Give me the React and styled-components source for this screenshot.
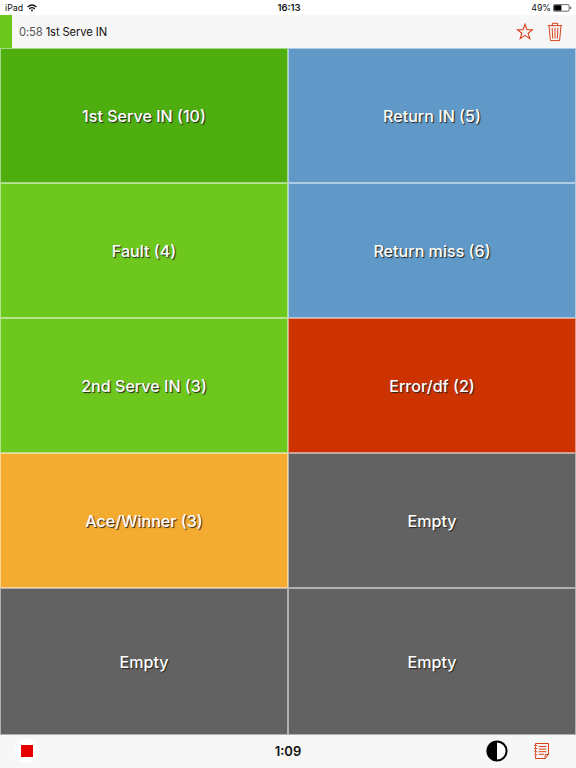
import React from 'react'
import styled, { createGlobalStyle } from 'styled-components'

const events = [
  { id: 1, label: '1st Serve IN (10)', color: '#4eae10' },
  { id: 2, label: 'Return IN (5)', color: '#6099c7' },
  { id: 3, label: 'Fault (4)', color: '#6dc71c' },
  { id: 4, label: 'Return miss (6)', color: '#6099c7' },
  { id: 5, label: '2nd Serve IN (3)', color: '#6dc71c' },
  { id: 6, label: 'Error/df (2)', color: '#cc3300' },
  { id: 7, label: 'Ace/Winner (3)', color: '#f4ac30' },
  { id: 8, label: 'Empty', color: '#626262' },
  { id: 9, label: 'Empty', color: '#626262' },
  { id: 10, label: 'Empty', color: '#626262' },
]

const WifiIcon = () => (
  <svg width="10" height="8" viewBox="0 0 10 8" fill="none" stroke="#111" strokeWidth="1.3">
    <path d="M.6 3Q5-1.1 9.4 3" />
    <path d="M2.3 4.9Q5 2.4 7.7 4.9" />
    <path d="M3.6 6 5 7.6 6.4 6Q5 5 3.6 6Z" fill="#111" stroke="none" />
  </svg>
)

const BatteryIcon = () => (
  <svg width="19" height="8" viewBox="0 0 19 8">
    <rect x=".5" y=".6" width="15.6" height="6.6" rx="1" fill="#fff" stroke="#444" strokeWidth=".8" />
    <rect x="1.2" y="1.2" width="7.2" height="5.4" fill="#000" />
    <path d="M17.1 2.6Q18.3 2.9 18.3 3.9T17.1 5.2Z" fill="#444" />
  </svg>
)

const StarIcon = () => (
  <svg width="18" height="18" viewBox="0 0 18 18" fill="none" stroke="#d8401c" strokeWidth="1.1">
    <path d="M9 1.2 10.9 6.7H16.6L12.1 10.2 13.8 15.7 9 12.4 4.2 15.7 5.9 10.2 1.4 6.7H7.1Z" />
  </svg>
)

const TrashIcon = () => (
  <svg width="16" height="20" viewBox="0 0 16 20" fill="none" stroke="#d8401c" strokeWidth="1">
    <path d="M.8 3.6H15.2M5.3 3.4V1.3H10.7V3.4M2 3.8 3.4 18.6H12.6L14 3.8" />
    <path d="M5.1 5.8 5.7 16.5M8 5.8V16.5M10.9 5.8 10.3 16.5" />
  </svg>
)

const ContrastIcon = () => (
  <svg width="22" height="22" viewBox="0 0 22 22">
    <circle cx="11" cy="11" r="9.6" fill="#fff" stroke="#000" strokeWidth="2" />
    <path d="M11 1.3A9.7 9.7 0 0 0 11 20.7Z" />
  </svg>
)

const NotesIcon = () => (
  <svg width="16" height="18" viewBox="0 0 16 18" fill="none" stroke="#d8401c" strokeWidth="1">
    <path d="M1.5 1.5H14.5V12.5L11.2 16.5H1.5V13.6M1.5 12.2V10.4M1.5 9V7.3M1.5 6V4.2M1.5 3V1.5" />
    <path d="M14.5 12.5H11.2V16.5" />
    <path d="M.3 3.5H3.2M.3 6.6H3.2M.3 9.7H3.2M.3 12.9H3.2" />
    <path d="M4.7 4.5H12.3M4.7 7.1H12.3M4.7 9.7H12.3M4.7 12.3H10" />
  </svg>
)

const App = () => (
  <Screen>
    <GlobalStyle />
    <StatusBar>
      <Carrier>
        <span>iPad</span>
        <WifiIcon />
      </Carrier>
      <Clock>16:13</Clock>
      <Battery>
        <span>49%</span>
        <BatteryIcon />
      </Battery>
    </StatusBar>
    <LastEvent>
      <ColorMark />
      <EventText>
        <EventTime>0:58</EventTime> 1st Serve IN
      </EventText>
      <HeaderActions>
        <IconButton aria-label="Favorite"><StarIcon /></IconButton>
        <IconButton aria-label="Delete"><TrashIcon /></IconButton>
      </HeaderActions>
    </LastEvent>
    <EventGrid>
      {events.map((event) => (
        <EventButton key={event.id} $color={event.color}>
          {event.label}
        </EventButton>
      ))}
    </EventGrid>
    <Footer>
      <StopButton aria-label="Stop"><StopSquare /></StopButton>
      <Timer>1:09</Timer>
      <FooterActions>
        <IconButton aria-label="Contrast"><ContrastIcon /></IconButton>
        <IconButton aria-label="Notes"><NotesIcon /></IconButton>
      </FooterActions>
    </Footer>
  </Screen>
)

const GlobalStyle = createGlobalStyle`
  * {
    box-sizing: border-box;
  }
  body {
    margin: 0;
    font-family: Inter, "Liberation Sans", sans-serif;
    color: #111;
  }
  button {
    border: 0;
    padding: 0;
    font: inherit;
    color: inherit;
    background: none;
  }
  svg {
    display: block;
  }
`

const Screen = styled.div`
  width: 576px;
  height: 768px;
  display: flex;
  flex-direction: column;
  overflow: hidden;
  background: #f7f7f7;
`

const StatusBar = styled.div`
  height: 15px;
  flex: none;
  display: grid;
  grid-template-columns: 1fr auto 1fr;
  align-items: center;
  padding: 1px 4px 0 5px;
  background: #fff;
  font-size: 8.8px;
  line-height: 14px;
`

const Carrier = styled.div`
  display: flex;
  align-items: center;
  gap: 4px;
`

const Clock = styled.div`
  margin-left: 1px;
  font-size: 9.5px;
  font-weight: 600;
`

const Battery = styled.div`
  display: flex;
  align-items: center;
  justify-content: flex-end;
  gap: 2px;
`

const LastEvent = styled.div`
  height: 33px;
  flex: none;
  display: flex;
  align-items: center;
  padding-right: 13px;
`

const ColorMark = styled.div`
  width: 12px;
  height: 33px;
  background: #6dc71c;
`

const EventText = styled.div`
  flex: 1;
  margin-left: 7px;
  font-size: 11.2px;
  line-height: 20px;
  letter-spacing: -0.1px;
`

const EventTime = styled.span`
  color: #555;
`

const HeaderActions = styled.div`
  display: flex;
  align-items: center;
  gap: 13px;
`

const IconButton = styled.button`
  display: flex;
`

const EventGrid = styled.div`
  height: 687px;
  flex: none;
  display: grid;
  grid-template-columns: 1fr 1fr;
  grid-template-rows: repeat(4, 135px) 1fr;
  background: #f7f7f7;
`

/* neighbouring half-tone borders read as one thin divider */
const EventButton = styled.button`
  display: flex;
  align-items: center;
  justify-content: center;
  border: 1px solid rgba(255, 255, 255, 0.5);
  background: ${({ $color }) => $color};
  color: #fff;
  font-size: 16.1px;
  font-weight: 500;
  line-height: 22px;
  text-shadow: 1px 1px 1px #222;
`

const Footer = styled.div`
  height: 33px;
  flex: none;
  display: grid;
  grid-template-columns: 1fr auto 1fr;
  align-items: center;
  padding: 0 26px 1px 15px;
`

const StopButton = styled.button`
  width: 24px;
  height: 24px;
  display: flex;
  align-items: center;
  justify-content: center;
  border-radius: 50%;
  background: #fff;
`

const StopSquare = styled.span`
  width: 12px;
  height: 12px;
  background: #e60000;
`

const Timer = styled.div`
  margin-left: 11px;
  font-size: 13px;
  font-weight: 600;
`

const FooterActions = styled.div`
  display: flex;
  align-items: center;
  justify-content: flex-end;
  gap: 26px;
`

export default App
